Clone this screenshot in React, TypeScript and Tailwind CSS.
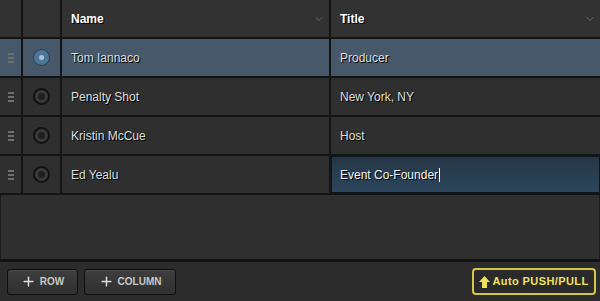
import { Plus, ChevronDown } from "lucide-react";

type Row = { name: string; title: string };

const rows: Row[] = [
  { name: "Tom Iannaco", title: "Producer" },
  { name: "Penalty Shot", title: "New York, NY" },
  { name: "Kristin McCue", title: "Host" },
  { name: "Ed Yealu", title: "Event Co-Founder" },
];

const grid = "grid grid-cols-[21px_37px_267px_1fr] gap-x-[2px]";

function Handle() {
  return (
    <div className="flex h-full items-center justify-center">
      <div className="flex flex-col gap-[2px]">
        <span className="block h-[2px] w-[6px] bg-[#6f6f6f]" />
        <span className="block h-[2px] w-[6px] bg-[#6f6f6f]" />
        <span className="block h-[2px] w-[6px] bg-[#6f6f6f]" />
      </div>
    </div>
  );
}

function Radio({ on }: { on: boolean }) {
  return (
    <div className="flex h-full items-center justify-center">
      {on ? (
        <span className="grid h-[17px] w-[17px] place-items-center rounded-full border border-[#2a3a48] bg-[#4b7698]">
          <span className="h-[5px] w-[5px] rounded-full bg-[#a9c2d6]" />
        </span>
      ) : (
        <span className="grid h-[17px] w-[17px] place-items-center rounded-full border-2 border-[#111] bg-[#3a3a3a]">
          <span className="h-[7px] w-[7px] rounded-full bg-[#1e1e1e]" />
        </span>
      )}
    </div>
  );
}

export default function App() {
  return (
    <div
      className="flex h-[301px] w-[600px] flex-col bg-[#141414] text-[12px]"
      style={{ fontFamily: '"Liberation Sans", Arial, sans-serif' }}
    >
      <div className="flex flex-col gap-y-[2px] bg-[#141414] pb-[2px]">
        <div className={`${grid} h-[37px]`}>
          <div className="bg-[#323232]" />
          <div className="bg-[#323232]" />
          <div className="flex items-center justify-between bg-[#323232] pl-[9px] pr-[4px]">
            <span className="font-bold text-white [text-shadow:1px_1px_0_#000]">Name</span>
            <ChevronDown size={12} strokeWidth={2} className="text-[#6a6a6a]" />
          </div>
          <div className="flex items-center justify-between bg-[#323232] pl-[9px] pr-[4px]">
            <span className="font-bold text-white [text-shadow:1px_1px_0_#000]">Title</span>
            <ChevronDown size={12} strokeWidth={2} className="text-[#6a6a6a]" />
          </div>
        </div>

        {rows.map((r, i) => {
          const sel = i === 0;
          const editing = i === 3;
          const cell = sel ? "bg-[#465869]" : "bg-[#2f2f2f]";
          return (
            <div key={r.name} className={`${grid} h-[37px]`}>
              <div className={cell}>
                <Handle />
              </div>
              <div className={cell}>
                <Radio on={sel} />
              </div>
              <div
                className={`${cell} flex items-center pl-[9px] text-[#dedede] [text-shadow:1px_1px_0_#000]`}
              >
                {r.name}
              </div>
              {editing ? (
                <div className="flex items-center border border-[#0c1620] bg-gradient-to-b from-[#253746] to-[#2c465c] pl-[8px] text-[#f2f2f2] [text-shadow:1px_1px_0_#000]">
                  {r.title}
                  <span className="ml-[1px] h-[14px] w-[1px] bg-white" />
                </div>
              ) : (
                <div
                  className={`${cell} flex items-center pl-[9px] text-[#dedede] [text-shadow:1px_1px_0_#000]`}
                >
                  {r.title}
                </div>
              )}
            </div>
          );
        })}
      </div>

      <div className="flex-1 border-x border-[#1c1c1c] bg-[#2f2f2f]" />

      <div className="flex h-[42px] items-center justify-between border-t-[3px] border-[#141414] bg-[#2c2c2c] px-[7px]">
        <div className="flex gap-[6px]">
          <button className="flex h-[26px] w-[71px] items-center justify-center gap-[4px] rounded-[3px] border border-[#0e0e0e] bg-gradient-to-b from-[#3e3e3e] to-[#303030] text-[10px] font-bold text-[#c8c8c8] shadow-[inset_0_1px_0_#4a4a4a]">
            <Plus size={15} strokeWidth={2.25} className="text-[#e0e0e0]" />
            ROW
          </button>
          <button className="flex h-[26px] w-[92px] items-center justify-center gap-[4px] rounded-[3px] border border-[#0e0e0e] bg-gradient-to-b from-[#3e3e3e] to-[#303030] text-[10px] font-bold text-[#c8c8c8] shadow-[inset_0_1px_0_#4a4a4a]">
            <Plus size={15} strokeWidth={2.25} className="text-[#e0e0e0]" />
            COLUMN
          </button>
        </div>
        <button className="mr-[-3px] flex h-[27px] w-[124px] items-center justify-center gap-[2px] rounded-[4px] border-2 border-[#d8c648] bg-[#2a2a2a] text-[11px] font-bold tracking-[0.4px] text-[#efe060]">
          <svg width="11" height="12" viewBox="0 0 11 12">
            <path d="M5.5 0 L11 6 L8 6 L8 12 L3 12 L3 6 L0 6 Z" fill="#efe060" />
          </svg>
          Auto PUSH/PULL
        </button>
      </div>
    </div>
  );
}
